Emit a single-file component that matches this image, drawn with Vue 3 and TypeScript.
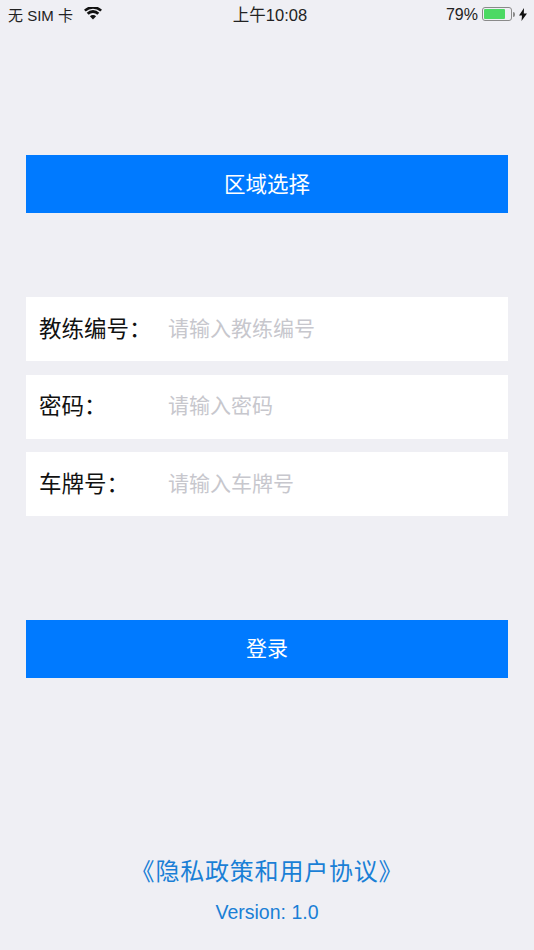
<script setup lang="ts">
const fields = [
  { label: '教练编号：', placeholder: '请输入教练编号' },
  { label: '密码：', placeholder: '请输入密码' },
  { label: '车牌号：', placeholder: '请输入车牌号' },
]
</script>

<template>
  <div class="page">
    <div class="status">
      <div class="left">
        <span>无 SIM 卡</span>
        <svg class="wifi" width="18" height="13" viewBox="0 0 20 14">
          <path d="M10 13.6 6.6 10a4.8 4.8 0 0 1 6.8 0L10 13.6Z" fill="#111" />
          <path d="M5.2 8.4 3 6.1a10 10 0 0 1 14 0l-2.2 2.3a6.9 6.9 0 0 0-9.6 0Z" fill="#111" />
          <path d="M1.9 4.9 0 2.8a14.5 14.5 0 0 1 20 0l-1.9 2.1a11.8 11.8 0 0 0-16.2 0Z" fill="#111" />
        </svg>
      </div>
      <div class="time">上午10:08</div>
      <div class="right">
        <span class="pct">79%</span>
        <div class="battery"><div class="level"></div></div>
        <div class="nub"></div>
        <svg class="bolt" width="8" height="13" viewBox="0 0 8 13">
          <path d="M5 0 0 7.4h3L2.5 13 8 5.4H4.8L5 0Z" fill="#111" />
        </svg>
      </div>
    </div>

    <button class="btn region">区域选择</button>

    <div class="fields">
      <div v-for="f in fields" :key="f.label" class="row">
        <span class="label">{{ f.label }}</span>
        <span class="ph">{{ f.placeholder }}</span>
      </div>
    </div>

    <button class="btn login">登录</button>

    <div class="footer">
      <div class="policy">《隐私政策和用户协议》</div>
      <div class="version">Version: 1.0</div>
    </div>
  </div>
</template>

<style>
html, body { margin: 0; background: #efeff4; }
</style>

<style scoped>
.page {
  width: 534px;
  height: 950px;
  background: #efeff4;
  display: flex;
  flex-direction: column;
  overflow: hidden;
  font-family: "Liberation Sans", "Noto Sans CJK SC", sans-serif;
}
.status {
  height: 28px;
  display: grid;
  grid-template-columns: 1fr auto 1fr;
  align-items: center;
  font-size: 15px;
  color: #222;
  padding: 0 7px 0 8px;
}
.left { display: flex; align-items: center; gap: 11px; }
.wifi { margin-top: -1px; }
.time { font-size: 16.5px; margin-left: 5px; }
.right { display: flex; align-items: center; justify-content: flex-end; font-size: 16px; }
.pct { padding-top: 2px; }
.battery {
  width: 26px;
  height: 10px;
  margin-left: 4px;
  border: 1px solid #8a8a8a;
  border-radius: 3px;
  padding: 1px;
  box-sizing: content-box;
}
.level { width: 82%; height: 100%; background: #4cd964; border-radius: 1px; }
.nub { width: 2px; height: 5px; background: #8a8a8a; margin-left: 1px; border-radius: 0 2px 2px 0; }
.bolt { margin-left: 4px; }
.btn {
  display: block;
  width: 482px;
  height: 58px;
  margin-left: 26px;
  border: 0;
  padding: 0 0 3px;
  background: #007aff;
  color: #fff;
  font-family: inherit;
}
.region { margin-top: 127px; font-size: 21.5px; }
.fields {
  margin: 84px 26px 0;
  display: flex;
  flex-direction: column;
  gap: 13.5px;
}
.row {
  height: 64px;
  background: #fff;
  display: flex;
  align-items: center;
  padding: 0 0 5px 13px;
  box-sizing: border-box;
}
.label { width: 129px; font-size: 22.5px; color: #111; }
.ph { font-size: 21px; color: #c7c7cd; }
.login { margin-top: 104px; font-size: 21px; padding-bottom: 5px; }
.footer {
  margin-top: auto;
  padding-bottom: 26px;
  text-align: center;
  color: #1a7fd6;
}
.policy { font-size: 24px; letter-spacing: 0.8px; line-height: 30px; position: relative; top: 1px; }
.version { font-size: 19.5px; line-height: 24px; margin-top: 14px; }
</style>
